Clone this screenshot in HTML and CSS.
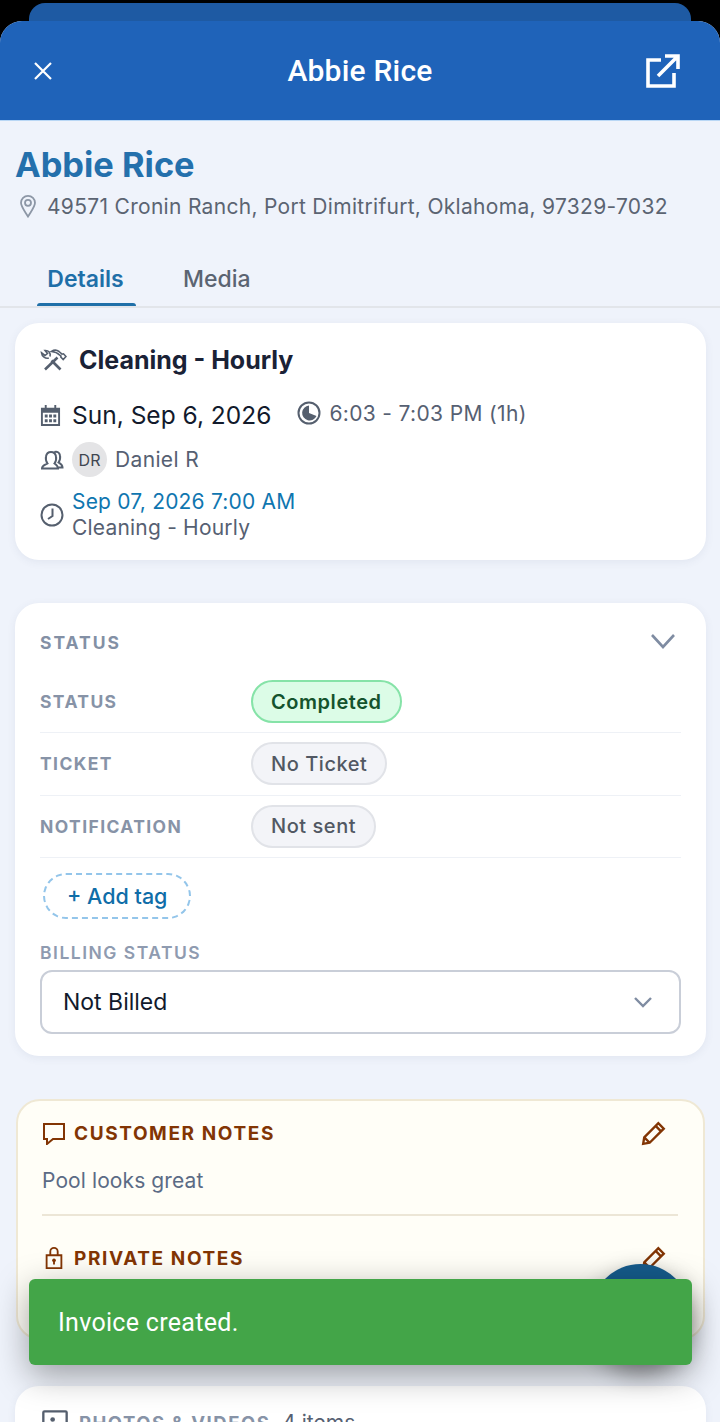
FILE: index.html
```html
<!DOCTYPE html>
<html lang="en">
<head>
    <meta charset="UTF-8">
    <meta name="viewport" content="width=device-width, initial-scale=1.0">
    <title>Abbie Rice</title>
    <link rel="stylesheet" href="styles.css">
</head>
<body>
<div class="screen">
    <div class="back-sheet"></div>
    <div class="sheet">
        <header class="topbar">
            <svg class="close-icon" viewBox="0 0 20 20"><path d="M2 2L18 18M18 2L2 18"/></svg>
            <h1>Abbie Rice</h1>
            <svg class="open-icon" viewBox="0 0 36 36"><path d="M16 7H3V33H29V20M13 23L33 3M20 3H33V16"/></svg>
        </header>

        <section class="customer">
            <h2>Abbie Rice</h2>
            <div class="address">
                <svg viewBox="0 0 20 24"><path d="M10 22.5C6 16 3 12.5 3 8.8A7 7 0 0 1 17 8.8C17 12.5 14 16 10 22.5Z"/><circle cx="10" cy="8.8" r="3"/></svg>
                <span>49571 Cronin Ranch, Port Dimitrifurt, Oklahoma, 97329-7032</span>
            </div>
        </section>

        <nav class="tabs">
            <a class="tab active">Details</a>
            <a class="tab">Media</a>
        </nav>

        <main class="content">
            <section class="card visit">
                <div class="visit-title">
                    <svg viewBox="0 0 27 22"><path class="handle" d="M17.500 8.500L5 20.500"/><path d="M11.500 2.500C14 0.800 17 1 19 2.500L22 5.200L23.500 4.800L26 7.500L23.200 10.500L20.800 8L21 7L19.500 6C17.500 3.800 14.500 2.800 11.500 2.500Z"/><path class="handle" d="M11.500 11.500L20.500 20.500"/><path d="M8.800 9C5.500 10 1.800 7.500 1.500 3.800L5 6.500L7.500 4.500L5 1.500C8.500 1.200 11 4 10 7.500"/></svg>
                    <h3>Cleaning - Hourly</h3>
                </div>
                <div class="visit-when">
                    <div class="when-date">
                        <svg viewBox="0 0 22 24"><path class="solid" d="M5 1H7V4H15V1H17V4H21V23H1V4H5ZM3 9V21H19V9Z"/><path class="solid" d="M5 11H8V14H5ZM9.500 11H12.500V14H9.500ZM14 11H17V14H14ZM5 16H8V19H5ZM9.500 16H12.500V19H9.500ZM14 16H17V19H14Z"/></svg>
                        <span>Sun, Sep 6, 2026</span>
                    </div>
                    <div class="when-time">
                        <svg viewBox="0 0 24 24"><circle cx="12" cy="12" r="10.500"/><path class="solid" d="M12 4.500A7.500 7.500 0 1 0 19.500 15L12 12Z"/></svg>
                        <span>6:03 - 7:03 PM (1h)</span>
                    </div>
                </div>
                <div class="visit-tech">
                    <svg viewBox="0 0 24 20"><path d="M2 18.500C2 15.500 5 15 7.500 13.500C6 11.500 5.500 9 6 6.500C6.500 3.500 8.500 2 11 2C13.500 2 15.500 3.500 16 6.500C16.500 9 16 11.500 14.500 13.500C17 15 18 16 18 18.500ZM14.500 2C17 1 19.500 2.500 20 5.500C20.500 8 20 10.500 18.500 12.500C20 13.500 22.500 14.500 22.500 17.500H18"/></svg>
                    <span class="avatar">DR</span>
                    <span>Daniel R</span>
                </div>
                <div class="visit-next">
                    <svg viewBox="0 0 24 24"><circle cx="12" cy="12" r="10.500"/><path d="M12.500 5.500V13L8 16"/></svg>
                    <div>
                        <div class="next-date">Sep 07, 2026 7:00 AM</div>
                        <div class="next-name">Cleaning - Hourly</div>
                    </div>
                </div>
            </section>

            <section class="card status">
                <div class="status-head">
                    <span>STATUS</span>
                    <svg viewBox="0 0 26 16"><path d="M2 2L13 14L24 2"/></svg>
                </div>
                <div class="status-row">
                    <span class="row-label">STATUS</span>
                    <span class="pill green">Completed</span>
                </div>
                <div class="status-row">
                    <span class="row-label">TICKET</span>
                    <span class="pill">No Ticket</span>
                </div>
                <div class="status-row">
                    <span class="row-label">NOTIFICATION</span>
                    <span class="pill">Not sent</span>
                </div>
                <a class="add-tag">+ Add tag</a>
                <div class="billing-label">BILLING STATUS</div>
                <div class="select">
                    <span>Not Billed</span>
                    <svg viewBox="0 0 20 12"><path d="M2 2L10 10L18 2"/></svg>
                </div>
            </section>

            <section class="card notes">
                <div class="notes-head">
                    <svg viewBox="0 0 24 24"><path d="M2 3H22V18H11L5 23V18H2Z"/></svg>
                    <span>CUSTOMER NOTES</span>
                    <svg class="edit" viewBox="0 0 24 24"><path d="M2 22L3 16L16 3L21 8L8 21ZM3 16L8 21M13.500 5.500L18.500 10.500"/></svg>
                </div>
                <p>Pool looks great</p>
                <div class="notes-head second">
                    <svg viewBox="0 0 24 26"><path d="M4 10H20V24H4ZM8 10V6A4 4 0 0 1 16 6V10"/><circle class="solid" cx="12" cy="15.500" r="2"/><path d="M12 16V20"/></svg>
                    <span>PRIVATE NOTES</span>
                    <svg class="edit" viewBox="0 0 24 24"><path d="M2 22L3 16L16 3L21 8L8 21ZM3 16L8 21M13.500 5.500L18.500 10.500"/></svg>
                </div>
            </section>

            <section class="card media">
                <svg viewBox="0 0 24 24"><rect x="2" y="2" width="20" height="20" rx="1"/><circle class="solid" cx="10" cy="9" r="2"/></svg>
                <span class="media-title">PHOTOS &amp; VIDEOS</span>
                <span class="media-count">4 items</span>
            </section>
        </main>
    </div>

    <div class="fab"></div>
    <div class="toast">Invoice created.</div>
</div>
</body>
</html>
```

FILE: styles.css
```css
* {
    box-sizing: border-box;
}

html, body {
    margin: 0;
    height: 100%;
}

body {
    background-color: #000;
    font-family: Inter, "Liberation Sans", sans-serif;
    overflow: hidden;
}

svg {
    fill: none;
    stroke: currentColor;
    stroke-width: 2;
    flex-shrink: 0;
}

svg .solid {
    fill: currentColor;
    stroke: none;
}

.screen {
    position: relative;
    width: 720px;
    height: 1422px;
    padding-top: 3px;
    overflow: hidden;
}

.back-sheet {
    height: 30px;
    margin: 0 29px -12px;
    border-radius: 16px 16px 0 0;
    background-color: #1e5aa3;
}

.sheet {
    position: relative;
    border-radius: 22px 22px 0 0;
    background-color: #eff3fb;
    height: 1401px;
    overflow: hidden;
}

/* top bar */
.topbar {
    display: grid;
    grid-template-columns: 1fr auto 1fr;
    align-items: center;
    height: 100px;
    padding: 0 39px 0 33px;
    background-color: #1f63b9;
    border-bottom: 1px solid #b9d7f5;
    color: #fff;
}

.topbar h1 {
    margin: 0 0 0 6px;
    font-family: Roboto, sans-serif;
    font-size: 30px;
    font-weight: 500;
    letter-spacing: 0.2px;
}

.close-icon {
    width: 20px;
    height: 20px;
    stroke-width: 2.2;
}

.open-icon {
    justify-self: end;
    width: 36px;
    height: 36px;
    stroke-width: 3.6;
}

/* customer block */
.customer {
    padding: 23px 15px 0;
}

.customer h2 {
    margin: 0;
    font-size: 34.400px;
    line-height: 41px;
    font-weight: 700;
    color: #2470ac;
}

.address {
    display: flex;
    align-items: center;
    gap: 8px;
    margin-top: 7px;
    height: 28px;
    padding-left: 2px;
    font-size: 21px;
    letter-spacing: 0.3px;
    color: #5b6472;
}

.address svg {
    width: 22px;
    height: 24px;
    color: #8d97a6;
    stroke-width: 1.8;
}

/* tabs */
.tabs {
    display: flex;
    gap: 47px;
    height: 60px;
    margin-top: 28px;
    padding-left: 37px;
    border-bottom: 2px solid #e2e5ea;
}

.tab {
    position: relative;
    width: 99px;
    padding-top: 17px;
    text-align: center;
    font-size: 23px;
    font-weight: 500;
    color: #5b6472;
}

.tab + .tab {
    width: auto;
}

.tab.active {
    padding-right: 2px;
    color: #1f6fa8;
    font-weight: 600;
}

.tab.active::after {
    content: "";
    position: absolute;
    left: 0;
    right: 0;
    bottom: 0;
    height: 3px;
    border-radius: 3px 3px 0 0;
    background-color: #1f6fa8;
}

/* cards */
.content {
    display: flex;
    flex-direction: column;
    padding: 15px 14px 0 15px;
}

.card {
    background-color: #fff;
    border-radius: 24px;
    box-shadow: 0 2px 8px rgba(60, 80, 120, 0.08);
}

/* visit card */
.visit {
    height: 237px;
    padding: 20px 25px;
}

.visit svg {
    color: #555f6e;
}

.visit-title {
    display: flex;
    align-items: center;
    gap: 12px;
}

.visit-title svg {
    width: 27px;
    height: 22px;
    stroke-width: 1.6;
}

.visit-title .handle {
    stroke-width: 2.6;
}

.visit-title h3 {
    margin: 0;
    font-size: 25px;
    line-height: 34px;
    font-weight: 700;
    color: #1a2236;
}

.visit-when {
    display: flex;
    align-items: center;
    gap: 26px;
    margin-top: 21px;
}

.when-date, .when-time {
    display: flex;
    align-items: center;
}

.when-date {
    gap: 11px;
    font-size: 24.5px;
    line-height: 34px;
    color: #121a2c;
}

.when-date svg {
    width: 21px;
    height: 23px;
}

.when-time {
    gap: 8px;
    margin-bottom: 4px;
    font-size: 21px;
    letter-spacing: 0.35px;
    color: #566072;
}

.when-time svg {
    width: 24px;
    height: 24px;
}

.visit-tech {
    display: flex;
    align-items: center;
    margin-top: 10px;
    font-size: 21px;
    letter-spacing: 0.35px;
    color: #566072;
}

.visit-tech svg {
    width: 24px;
    height: 20px;
    margin-right: 8px;
    stroke-width: 2;
}

.avatar {
    display: flex;
    align-items: center;
    justify-content: center;
    width: 35px;
    height: 35px;
    margin-right: 8px;
    border-radius: 50%;
    background-color: #e4e4e6;
    font-size: 16px;
    letter-spacing: 0;
    color: #3f4650;
}

.visit-next {
    display: flex;
    align-items: center;
    gap: 8px;
    margin-top: 12px;
    font-size: 21px;
    letter-spacing: 0.2px;
    line-height: 26px;
}

.visit-next svg {
    width: 24px;
    height: 24px;
    stroke-width: 2;
}

.next-date {
    color: #0f76b0;
}

.next-name {
    color: #566072;
}

/* status card */
.status {
    height: 453px;
    margin-top: 43px;
    padding: 0 25px;
}

.status-head {
    display: flex;
    align-items: center;
    justify-content: space-between;
    height: 68px;
    padding: 11px 5px 0 0;
    font-size: 17.500px;
    font-weight: 700;
    letter-spacing: 2px;
    color: #8390a5;
}

.status-head svg {
    width: 26px;
    height: 16px;
    margin-bottom: 4px;
    color: #7f8ca2;
    stroke-width: 2.6;
}

.status-row {
    display: flex;
    align-items: center;
    height: 62.333px;
    border-bottom: 1px solid #eef1f6;
}

.row-label {
    width: 211px;
    font-size: 17.500px;
    font-weight: 700;
    letter-spacing: 1.400px;
    color: #8793a7;
}

.pill {
    display: inline-flex;
    align-items: center;
    height: 43px;
    padding: 0 18px;
    border: 2px solid #e1e3e8;
    border-radius: 22px;
    background-color: #f3f4f8;
    font-size: 20px;
    font-weight: 500;
    letter-spacing: 0.55px;
    color: #515863;
}

.pill.green {
    background-color: #dcfce7;
    border-color: #86e3a8;
    color: #14532d;
    font-weight: 600;
}

.add-tag {
    display: inline-flex;
    align-items: center;
    height: 46px;
    margin: 15px 0 0 3px;
    padding: 0 22px;
    border: 2px dashed #93c5ea;
    border-radius: 23px;
    font-size: 21.500px;
    font-weight: 500;
    color: #0f6da8;
}

.billing-label {
    margin-top: 23px;
    font-size: 17.500px;
    font-weight: 600;
    letter-spacing: 1.500px;
    color: #8f9bb0;
}

.select {
    display: flex;
    align-items: center;
    justify-content: space-between;
    height: 64px;
    margin-top: 7px;
    padding: 0 26px 0 21px;
    border: 2px solid #c9ced8;
    border-radius: 12px;
    font-size: 23px;
    color: #121a2c;
}

.select svg {
    width: 20px;
    height: 12px;
    color: #7f8ca2;
    stroke-width: 2.4;
}

/* notes card */
.notes {
    height: 241px;
    margin: 43px 1px 0;
    padding: 18px 25px 0 24px;
    background-color: #fffef7;
    border: 2px solid #efe8d4;
    box-shadow: none;
}

.notes-head {
    display: flex;
    align-items: center;
    gap: 8px;
    height: 28px;
    font-size: 19px;
    font-weight: 700;
    letter-spacing: 1.600px;
    color: #823504;
}

.notes-head svg {
    width: 24px;
    height: 24px;
}

.notes-head span {
    flex: 1;
}

.notes-head .edit {
    margin-right: 11px;
    width: 26px;
    height: 26px;
    stroke-width: 2.2;
}

.notes p {
    margin: 20px 0 0;
    padding-bottom: 19px;
    border-bottom: 2px solid #ece6d6;
    font-size: 21px;
    line-height: 28px;
    letter-spacing: 0.1px;
    color: #5b6b85;
}

.notes-head.second {
    margin-top: 28px;
}

/* media card */
.media {
    display: flex;
    align-items: flex-start;
    height: 120px;
    margin-top: 46px;
    padding: 23px 26px;
    color: #8793a7;
}

.media svg {
    width: 28px;
    height: 28px;
    margin-right: 10px;
    color: #555f6e;
}

.media-title {
    margin-top: 2px;
    font-size: 18.500px;
    line-height: 24px;
    font-weight: 700;
    letter-spacing: 1.500px;
}

.media-count {
    margin: 2px 0 0 12px;
    font-size: 21px;
    line-height: 24px;
    color: #566072;
}

/* overlays */
.fab {
    position: absolute;
    left: 591px;
    top: 1264px;
    width: 99px;
    height: 99px;
    border-radius: 50%;
    background-color: #155a8a;
    box-shadow: 0 10px 24px rgba(0, 0, 0, 0.4);
}

.toast {
    position: absolute;
    left: 29px;
    top: 1279px;
    display: flex;
    align-items: center;
    width: 663px;
    height: 86px;
    padding-left: 29px;
    border-radius: 6px;
    background-color: #43a548;
    box-shadow: 0 10px 34px rgba(0, 0, 0, 0.36);
    font-family: Roboto, sans-serif;
    font-size: 25px;
    letter-spacing: 0.3px;
    color: #fff;
}
```
